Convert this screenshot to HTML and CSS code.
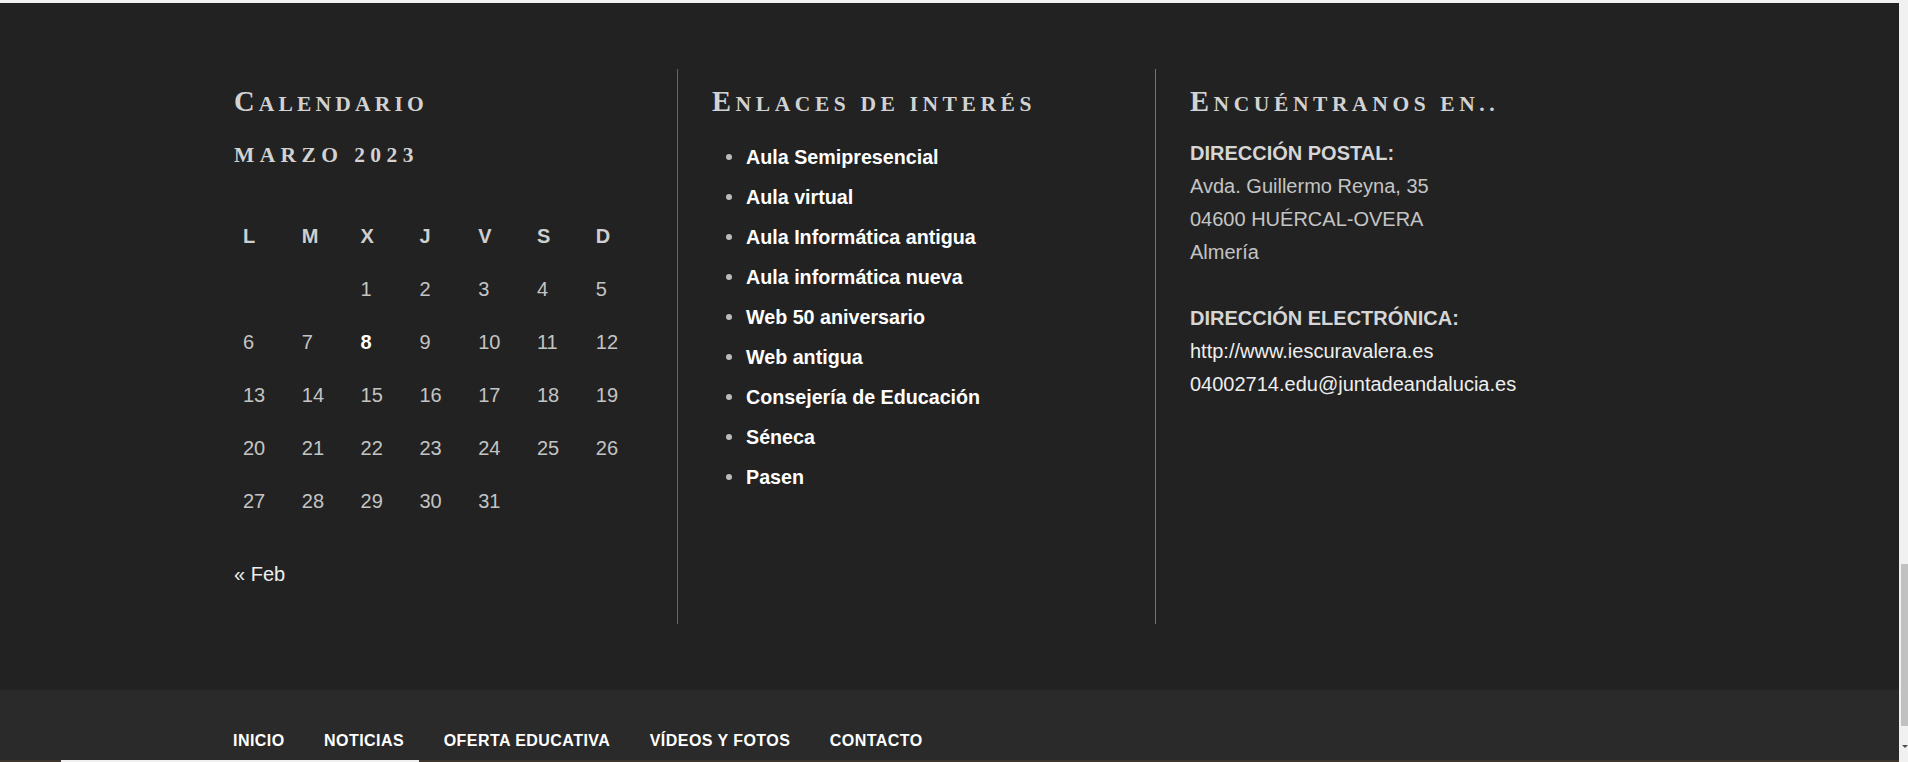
FILE: index.html
```html
<!DOCTYPE html>
<html lang="es">
<head>
<meta charset="utf-8">
<title>Pie de página</title>
<link rel="stylesheet" href="styles.css">
</head>
<body>
<div class="screen">
  <div class="page">
    <div class="top-strip"></div>
    <footer class="widgets">
      <div class="cols">
        <section class="col col-cal">
          <h2 class="wtitle">Calendario</h2>
          <div class="cal-caption">marzo 2023</div>
          <div class="cal-grid">
            <span class="dh">L</span><span class="dh">M</span><span class="dh">X</span><span class="dh">J</span><span class="dh">V</span><span class="dh">S</span><span class="dh">D</span>
            <span></span><span></span><span>1</span><span>2</span><span>3</span><span>4</span><span>5</span>
            <span>6</span><span>7</span><span class="today">8</span><span>9</span><span>10</span><span>11</span><span>12</span>
            <span>13</span><span>14</span><span>15</span><span>16</span><span>17</span><span>18</span><span>19</span>
            <span>20</span><span>21</span><span>22</span><span>23</span><span>24</span><span>25</span><span>26</span>
            <span>27</span><span>28</span><span>29</span><span>30</span><span>31</span><span></span><span></span>
          </div>
          <a class="cal-prev" href="#">« Feb</a>
        </section>
        <section class="col col-links">
          <h2 class="wtitle">Enlaces de interés</h2>
          <ul class="links">
            <li><a href="#">Aula Semipresencial</a></li>
            <li><a href="#">Aula virtual</a></li>
            <li><a href="#">Aula Informática antigua</a></li>
            <li><a href="#">Aula informática nueva</a></li>
            <li><a href="#">Web 50 aniversario</a></li>
            <li><a href="#">Web antigua</a></li>
            <li><a href="#">Consejería de Educación</a></li>
            <li><a href="#">Séneca</a></li>
            <li><a href="#">Pasen</a></li>
          </ul>
        </section>
        <section class="col col-contact">
          <h2 class="wtitle">Encuéntranos en..</h2>
          <p class="contact">
            <strong>DIRECCIÓN POSTAL:</strong><br>
            Avda. Guillermo Reyna, 35<br>
            04600 HUÉRCAL-OVERA<br>
            Almería<br>
            <br>
            <strong>DIRECCIÓN ELECTRÓNICA:</strong><br>
            <a href="#">http://www.iescuravalera.es</a><br>
            <a href="#">04002714.edu@juntadeandalucia.es</a>
          </p>
        </section>
      </div>
    </footer>
    <nav class="footer-nav">
      <a href="#">Inicio</a>
      <a href="#">Noticias</a>
      <a href="#">Oferta educativa</a>
      <a href="#">Vídeos y fotos</a>
      <a href="#">Contacto</a>
    </nav>
    <div class="bottom-strip"><span class="bar-white"></span></div>
  </div>
  <div class="scrollbar">
    <div class="thumb"></div>
    <div class="arrow"></div>
  </div>
</div>
</body>
</html>
```

FILE: styles.css
```css
html, body {
  margin: 0;
  height: 762px;
  overflow: hidden;
  background: #222222;
}

.screen {
  display: flex;
  height: 762px;
}

.page {
  flex: 1;
  min-width: 0;
  display: flex;
  flex-direction: column;
}

.top-strip {
  height: 3px;
  background: #f1f1f1;
}

.widgets {
  height: 687px;
  box-sizing: border-box;
  padding-top: 66px;
  background: #222222;
}

.cols {
  display: flex;
  margin-left: 199px;
}

.col {
  width: 478px;
  height: 555px;
  box-sizing: border-box;
  border-left: 1px solid transparent;
  padding: 17px 0 0 34px;
}

.col-links {
  border-left-color: #b2473b;
}

.col-contact {
  border-left-color: #4f8676;
}

.wtitle,
.cal-caption {
  margin: 0;
  font-family: "Liberation Serif", "DejaVu Serif", serif;
  font-weight: 700;
  font-size: 21.5px;
  line-height: 36px;
  text-transform: uppercase;
  letter-spacing: 4.6px;
  color: #d2d2d2;
}

.wtitle::first-letter {
  font-size: 28.5px;
  line-height: 1;
}

.col-cal .wtitle {
  letter-spacing: 4.2px;
}

.cal-caption {
  margin-top: 15.4px;
  letter-spacing: 5.4px;
}

.cal-grid {
  display: grid;
  grid-template-columns: repeat(7, 58.8px);
  grid-auto-rows: 53px;
  margin-top: 36.2px;
  padding-left: 9px;
  font-family: "Liberation Sans", Arial, sans-serif;
  font-size: 20px;
  line-height: 53px;
  color: #c4c4c4;
}

.cal-grid .dh {
  font-weight: 700;
  color: #cfcfcf;
}

.cal-grid .today {
  font-weight: 700;
  color: #ffffff;
}

.cal-prev {
  display: block;
  margin-top: 30px;
  font-family: "Liberation Sans", Arial, sans-serif;
  font-size: 20px;
  line-height: 33px;
  color: #eeeeee;
  text-decoration: none;
}

.links {
  list-style: none;
  margin: 15.1px 0 0;
  padding: 0 0 0 14px;
}

.links li {
  display: flex;
  align-items: center;
  height: 40px;
  font-family: "Liberation Sans", Arial, sans-serif;
  font-weight: 700;
  font-size: 19.7px;
  line-height: 40px;
}

.links li::before {
  content: "";
  width: 6px;
  height: 6px;
  border-radius: 50%;
  background: #bbbbbb;
  margin-right: 14px;
  flex: none;
}

.links a {
  color: #ffffff;
  text-decoration: none;
}

.contact {
  margin: 14.6px 0 0;
  font-family: "Liberation Sans", Arial, sans-serif;
  font-size: 20px;
  line-height: 33px;
  color: #c4c4c4;
}

.contact strong {
  color: #d6d6d6;
}

.contact a {
  color: #eeeeee;
  text-decoration: none;
}

.footer-nav {
  height: 70px;
  box-sizing: border-box;
  display: flex;
  gap: 39.5px;
  padding: 41px 0 0 233px;
  background: #2a2a2a;
}

.footer-nav a {
  font-family: "Liberation Sans", Arial, sans-serif;
  font-weight: 700;
  font-size: 16px;
  line-height: 20px;
  letter-spacing: 0.45px;
  text-transform: uppercase;
  color: #ffffff;
  text-decoration: none;
}

.bottom-strip {
  height: 2px;
  display: flex;
  background: #3d362f;
}

.bar-white {
  margin-left: 61px;
  width: 358px;
  background: #f0f0f0;
}

.scrollbar {
  width: 9px;
  flex: none;
  display: flex;
  flex-direction: column;
  background: #f1f1f1;
}

.thumb {
  margin: 564px 0 0 2px;
  height: 162px;
  background: #c1c1c1;
}

.arrow {
  margin: 19px 0 0 3px;
  width: 0;
  height: 0;
  border-left: 3px solid transparent;
  border-right: 3px solid transparent;
  border-top: 3px solid #505050;
}
```
